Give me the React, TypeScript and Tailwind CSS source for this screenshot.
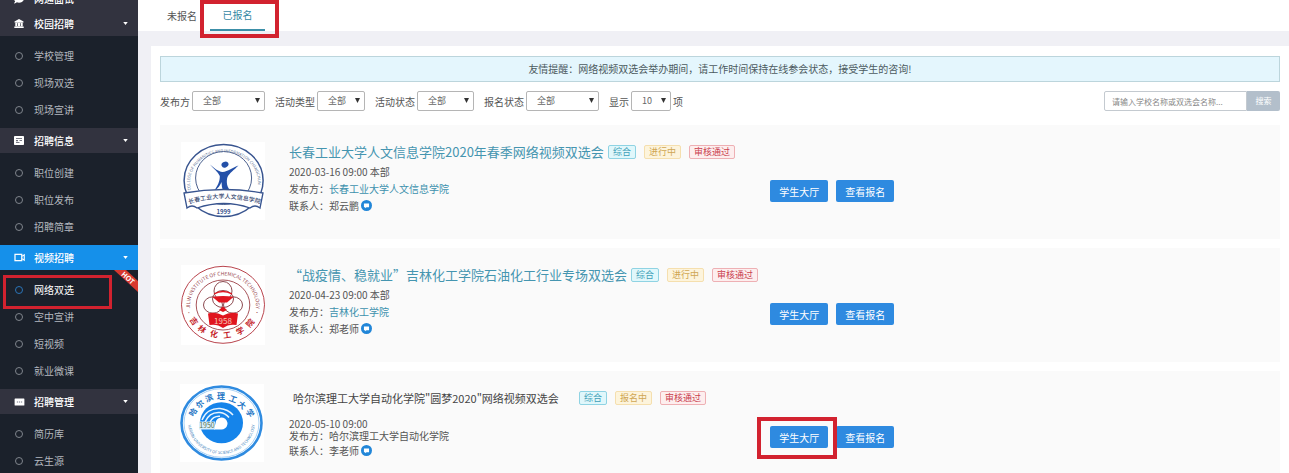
import React from "react";
import { FaComment } from "react-icons/fa";

type MenuGroup = {
  title: string;
  icon: React.ReactNode;
  active?: boolean;
  items: string[];
};

type Tone = "cyan" | "amber" | "red";

type Fair = {
  id: string;
  title: string;
  date: string;
  publisher: string;
  contact: string;
  tags: { label: string; tone: Tone }[];
  logo: React.ReactNode;
  plain?: boolean;
  marked?: boolean;
};

const CampusIcon = () => (
  <svg viewBox="0 0 10 9" className="h-[9px] w-[10px]" fill="#fff">
    <path d="M5 0 9.500 2.600V3.500H.5V2.600z" />
    <path d="M1.300 3.500h7.400v3.700H1.300zM.3 7.600h9.400V9H.3z" />
    <path d="M3.500 4.200v2.800M6.500 4.200v2.800" stroke="#32333f" strokeWidth="0.700" />
  </svg>
);

const NewsIcon = () => (
  <svg viewBox="0 0 10 9" className="h-[9px] w-[10px]">
    <rect width="10" height="9" rx="0.800" fill="#fff" />
    <path d="M2 2.500h6M5.500 4.500H8M2 6.500h3.500" stroke="#6a6b77" strokeWidth="0.900" />
    <path d="M2 4h2v1.300H2z" fill="#6a6b77" />
  </svg>
);

const VideoIcon = () => (
  <svg viewBox="0 0 12 10" className="h-[9px] w-[11px]" fill="none" stroke="currentColor">
    <rect x="1" y="1.500" width="7.500" height="7" strokeWidth="1.400" />
    <path d="M9 3.600 11.300 2v6L9 6.400" strokeWidth="1.200" />
  </svg>
);

const ManageIcon = () => (
  <svg viewBox="0 0 12 9" className="h-2 w-[11px]">
    <rect x="0.500" y="0.500" width="11" height="8" rx="0.600" fill="#fff" />
    <path d="M3 4.500h1.400M5.300 4.500h1.400M7.600 4.500H9" stroke="#777985" strokeWidth="1.400" />
  </svg>
);

const MENU: MenuGroup[] = [
  {
    title: "校园招聘",
    icon: <CampusIcon />,
    items: ["学校管理", "现场双选", "现场宣讲"],
  },
  {
    title: "招聘信息",
    icon: <NewsIcon />,
    items: ["职位创建", "职位发布", "招聘简章"],
  },
  {
    title: "视频招聘",
    icon: <VideoIcon />,
    active: true,
    items: ["网络双选", "空中宣讲", "短视频", "就业微课"],
  },
  {
    title: "招聘管理",
    icon: <ManageIcon />,
    items: ["简历库", "云生源"],
  },
];

const TONES: Record<Tone, string> = {
  cyan: "border-[#8fd3e3] bg-[#e0f7fb] text-[#3f9fb8]",
  amber: "border-[#f5dfae] bg-[#fdf4dc] text-[#cfa653]",
  red: "border-[#eeb0b4] bg-[#fdeeee] text-[#c9414f]",
};

// [character, x, y, rotation] around the emblem ring
type RingChar = [string, number, number, number];

const CHEMICAL_RING: RingChar[] = [
  ["吉", 13, 56, 55],
  ["林", 21, 64, 35],
  ["化", 33, 69, 12],
  ["工", 46, 70, -8],
  ["学", 59, 66, -28],
  ["院", 69, 58, -50],
];

const HARBIN_RING: RingChar[] = [
  ["哈", 13, 28, -60],
  ["尔", 20, 20, -42],
  ["滨", 29, 14, -22],
  ["理", 41, 12, 0],
  ["工", 53, 15, 20],
  ["大", 62, 21, 40],
  ["学", 70, 29, 60],
];

function RingText({ chars, fill }: { chars: RingChar[]; fill: string }) {
  return (
    <g fontSize="8" fontWeight="700" fill={fill} textAnchor="middle">
      {chars.map(([char, x, y, angle]) => (
        <text key={char} transform={`translate(${x} ${y}) rotate(${angle})`} y="3">
          {char}
        </text>
      ))}
    </g>
  );
}

const LogoHumanities = () => (
  <svg viewBox="0 0 84 78" className="h-[78px] w-[84px] bg-white" role="img" aria-label="长春工业大学人文信息学院">
    <defs>
      <path id="hum-top" d="M10 48A34 30.500 0 1 1 76 48" />
      <path id="hum-band" d="M8 62Q42.500 51 79 62" />
    </defs>
    <ellipse cx="42.600" cy="38.500" rx="39.500" ry="36" fill="#fff" stroke="#38548f" strokeWidth="1.500" />
    <ellipse cx="42.600" cy="36" rx="28" ry="26.500" fill="none" stroke="#4a5f8d" strokeWidth="1" />
    <text fontSize="4" fill="#667799">
      <textPath href="#hum-top">COLLEGE OF HUMANITIES AND INFORMATION CHANGCHUN</textPath>
    </text>
    <ellipse cx="44" cy="22.600" rx="3.600" ry="2.900" fill="#2450a8" transform="rotate(-25 44 22.600)" />
    <path
      d="M29 22.500C33 26 37 29.500 41.500 30 47 29.500 52 25.500 57.500 23.500 53 28 48.500 31 46.500 35 45 40 46 45 49.500 49H42C41 46 40.500 43 40.500 40 39.500 43 37 46.500 33 49 36.500 44 39 39.500 38.800 34 37 30 32.500 26.500 29 22.500Z"
      fill="#2450a8"
    />
    <path d="M3 51Q43 44 82 51L79 66Q74 62 69 66Q43 57 16 66Q11 62 6 66Z" fill="#fff" stroke="#38548f" strokeWidth="1.300" />
    <text fontSize="6" fontWeight="500" fill="#34466f" textAnchor="middle">
      <textPath href="#hum-band" startOffset="50%">
        长春工业大学人文信息学院
      </textPath>
    </text>
    <text x="42.500" y="71.500" fontSize="6" fontWeight="700" textAnchor="middle" fill="#38548f">
      1999
    </text>
  </svg>
);

const LogoChemical = () => (
  <svg viewBox="0 0 84 80" className="h-20 w-[84px] bg-white" role="img" aria-label="吉林化工学院">
    <defs>
      <path id="chem-top" d="M10.500 50A33 30.500 0 1 1 73.500 50" />
    </defs>
    <ellipse cx="42" cy="39.800" rx="41.500" ry="38.500" fill="#fff" stroke="#b9444d" strokeWidth="1" />
    <ellipse cx="42" cy="40" rx="26.800" ry="25" fill="none" stroke="#a8545a" strokeWidth="1" />
    <text fontSize="5" fill="#9a4a50" textAnchor="middle">
      <textPath href="#chem-top" startOffset="50%">
        • JILIN INSTITUTE OF CHEMICAL TECHNOLOGY •
      </textPath>
    </text>
    <RingText chars={CHEMICAL_RING} fill="#c51f2b" />
    <g fill="none" stroke="#8c4a50" strokeWidth="1">
      <ellipse cx="42" cy="26" rx="9" ry="9.500" />
      <ellipse cx="32" cy="40" rx="9.500" ry="8.200" />
      <ellipse cx="52" cy="40" rx="9.500" ry="8.200" />
      <ellipse cx="42" cy="34" rx="10.500" ry="8.500" />
    </g>
    <path d="M31.500 32Q42 30 52.500 32L46 37.500H38Z" fill="#e0151f" />
    <path d="M33 29Q42 24 51 29" fill="none" stroke="#e0151f" strokeWidth="1.400" />
    <path d="M38 45 42 41.500 46 45 42 47Z" fill="#e0151f" />
    <path d="M27 48.500Q35 46.500 42 50.500Q49 46.500 57 48.500L55.500 60Q48 58.500 42 63Q36 58.500 28.500 60Z" fill="#e0151f" />
    <text x="42" y="58.500" fontSize="8" textAnchor="middle" fill="#f7c9b8">
      1958
    </text>
  </svg>
);

const LogoHarbin = () => (
  <svg viewBox="0 0 84 78" className="h-[78px] w-[84px] bg-white" role="img" aria-label="哈尔滨理工大学">
    <defs>
      <path id="hrb-low" d="M8 38A33.500 32 0 0 0 75 38" />
    </defs>
    <ellipse cx="41.500" cy="39" rx="40" ry="36.500" fill="#fff" stroke="#2f8be0" strokeWidth="2.600" />
    <ellipse cx="41.500" cy="39" rx="37.500" ry="34.300" fill="none" stroke="#a9d2f5" strokeWidth="1" />
    <RingText chars={HARBIN_RING} fill="#2676c4" />
    <text fontSize="4" fill="#4a87be" textAnchor="middle">
      <textPath href="#hrb-low" startOffset="50%">
        HARBIN UNIVERSITY OF SCIENCE AND TECHNOLOGY
      </textPath>
    </text>
    <ellipse cx="41.500" cy="38.800" rx="21.500" ry="20.500" fill="#1584ea" />
    <g fill="none" stroke="#e9f5ff" strokeWidth="1.500">
      <path d="M22 36C25 28 32 24 40 24.500C46 25 50 27.500 53 31" />
      <path d="M25 38C28 31 34 28 40 28.500C44 29 47 31 49 33.500" />
      <path d="M30 38C32 34 36 32 40 32.300" />
    </g>
    <path d="M34 45.500H41A6 6 0 1 0 36 37Z" fill="#fff" />
    <rect x="19" y="37.500" width="16" height="8" fill="#d8eefc" />
    <text x="27" y="44" fontSize="7" textAnchor="middle" fill="#56724f">
      1950
    </text>
  </svg>
);

const FAIRS: Fair[] = [
  {
    id: "humanities",
    title: "长春工业大学人文信息学院2020年春季网络视频双选会",
    date: "2020-03-16 09:00 本部",
    publisher: "长春工业大学人文信息学院",
    contact: "郑云鹏",
    tags: [
      { label: "综合", tone: "cyan" },
      { label: "进行中", tone: "amber" },
      { label: "审核通过", tone: "red" },
    ],
    logo: <LogoHumanities />,
  },
  {
    id: "chemical",
    title: "“战疫情、稳就业”吉林化工学院石油化工行业专场双选会",
    date: "2020-04-23 09:00 本部",
    publisher: "吉林化工学院",
    contact: "郑老师",
    tags: [
      { label: "综合", tone: "cyan" },
      { label: "进行中", tone: "amber" },
      { label: "审核通过", tone: "red" },
    ],
    logo: <LogoChemical />,
  },
  {
    id: "harbin",
    title: "哈尔滨理工大学自动化学院\"圆梦2020\"网络视频双选会",
    date: "2020-05-10 09:00",
    publisher: "哈尔滨理工大学自动化学院",
    contact: "李老师",
    tags: [
      { label: "综合", tone: "cyan" },
      { label: "报名中", tone: "amber" },
      { label: "审核通过", tone: "red" },
    ],
    logo: <LogoHarbin />,
    plain: true,
    marked: true,
  },
];

function HotRibbon() {
  return (
    <svg viewBox="0 0 25 23" className="absolute top-0 right-0 h-[23px] w-[25px]">
      <path d="M1 0H13L25 11V22Z" fill="#d8382f" />
      <text
        x="15"
        y="10.500"
        fontSize="7"
        fontWeight="700"
        textAnchor="middle"
        fill="#fff"
        transform="rotate(42 15 8)"
      >
        HOT
      </text>
    </svg>
  );
}

function GroupHeader({ title, icon, active }: Omit<MenuGroup, "items">) {
  return (
    <button
      type="button"
      className={`flex h-[25px] w-full items-center pr-[10px] pl-[14px] text-[10px] font-medium text-white ${
        active ? "bg-[#1590ea]" : "bg-[#32333f]"
      }`}
    >
      <span className="flex w-[20px] items-center">{icon}</span>
      <span className="flex-1 text-left">{title}</span>
      <svg viewBox="0 0 6 4" className="h-[3px] w-[5px]">
        <path d="M0 0h6L3 4z" fill="currentColor" />
      </svg>
    </button>
  );
}

function Sidebar() {
  return (
    <nav className="w-[138px] shrink-0 overflow-hidden bg-[#1b212b]">
      <div className="-mt-[14px]">
        <GroupHeader title="网通面试" icon={<FaComment size={10} />} />
        {MENU.map((group) => (
          <div key={group.title}>
            <GroupHeader title={group.title} icon={group.icon} active={group.active} />
            <ul className="relative pt-[6px] pb-[5px]">
              {group.active && <HotRibbon />}
              {group.items.map((item) => {
                const current = item === "网络双选";
                return (
                  <li key={item} className="relative">
                    <a
                      href="#"
                      className={`flex h-[27px] items-center gap-[11px] pl-[15px] text-[10px] ${
                        current ? "text-white" : "text-[#b4b8bf]"
                      }`}
                    >
                      <span
                        className={`size-2 rounded-full border ${
                          current ? "border-[#2a74b8]" : "border-[#80858d]"
                        }`}
                      />
                      {item}
                    </a>
                    {current && (
                      <span className="pointer-events-none absolute -top-px left-[3px] h-[34px] w-[109px] border-3 border-[#d2222f]" />
                    )}
                  </li>
                );
              })}
            </ul>
          </div>
        ))}
      </div>
    </nav>
  );
}

function Filter({
  id,
  label,
  value,
  width,
  suffix,
}: {
  id: string;
  label: string;
  value: string;
  width: string;
  suffix?: string;
}) {
  return (
    <div className="flex items-center gap-0.5">
      <label htmlFor={id}>{label}</label>
      <span className={`relative ${width}`}>
        <select
          id={id}
          className="block h-5 w-full appearance-none rounded-xs border border-[#b5b5b5] bg-white pl-[10px] text-[9px] text-[#666]"
        >
          <option>{value}</option>
        </select>
        <svg viewBox="0 0 5 5" className="pointer-events-none absolute top-[7px] right-[5px] size-[5px]">
          <path d="M0 0h5L2.500 5z" fill="#333" />
        </svg>
      </span>
      {suffix && <span>{suffix}</span>}
    </div>
  );
}

function FairCard({ fair }: { fair: Fair }) {
  const { title, date, publisher, contact, tags, logo, plain, marked } = fair;

  return (
    <li className="grid min-h-[114px] grid-cols-[129px_17fr_18fr] bg-[#fafafa]">
      <div className={plain ? "pt-[13px] pl-[20px]" : "pt-[17px] pl-[21px]"}>{logo}</div>

      {/* Info */}
      <div className="pt-[18px] text-[10px] whitespace-nowrap text-[#555]">
        <div className={plain ? "flex h-[18px] items-center gap-[20px] pl-1" : "flex h-[18px] items-center gap-1"}>
          <h3>
            {plain ? (
              <span className="text-[11px] text-[#444]">{title}</span>
            ) : (
              <a href="#" className="text-[13px] text-[#4595b0]">
                {title}
              </a>
            )}
          </h3>
          <div className="flex gap-2">
            {tags.map((tag) => (
              <span
                key={tag.label}
                className={`h-[14px] rounded-xs border px-1 text-[9px] leading-[12px] ${TONES[tag.tone]}`}
              >
                {tag.label}
              </span>
            ))}
          </div>
        </div>
        <p className={plain ? "mt-[11px] leading-[12px]" : "mt-0.5 leading-[17px]"}>{date}</p>
        <p className={plain ? "leading-[12px]" : "leading-[17px]"}>
          发布方：
          {plain ? (
            publisher
          ) : (
            <a href="#" className="text-[#3d91ad]">
              {publisher}
            </a>
          )}
        </p>
        <p className="flex items-center gap-0.5 leading-[17px]">
          联系人：{contact}
          <button type="button" aria-label="在线沟通">
            <svg viewBox="0 0 12 12" className="size-[11px]">
              <circle cx="6" cy="6" r="6" fill="#2186d8" />
              <path d="M3.200 3.800h5.600v4H6L4.500 9V7.800H3.200z" fill="#fff" />
            </svg>
          </button>
        </p>
      </div>

      {/* Actions */}
      <div className="flex items-start gap-2 pt-[55px] text-[10px] text-white">
        <div className="relative">
          <button type="button" className="h-[22px] w-[58px] rounded-xs bg-[#2e8ae0]">
            学生大厅
          </button>
          {marked && (
            <span className="pointer-events-none absolute -top-[9px] -left-[13px] z-10 h-[42px] w-[80px] border-4 border-[#d2222f]" />
          )}
        </div>
        <button type="button" className="h-[22px] w-[58px] rounded-xs bg-[#2e8ae0]">
          查看报名
        </button>
      </div>
    </li>
  );
}

export default function App() {
  return (
    <div
      lang="zh-CN"
      className="flex h-screen overflow-hidden bg-[#f0f0f5] font-['Noto_Sans_CJK_SC',sans-serif] text-[10px] text-[#555]"
    >
      <Sidebar />

      <main className="min-w-0 flex-1">
        {/* Tabs */}
        <div className="flex h-[31px] bg-white pl-[18px]">
          <a href="#" className="flex items-center px-[11px]">
            未报名
          </a>
          <div className="relative ml-[2px]">
            <a
              href="#"
              className="flex h-[31px] w-[55px] items-center justify-center border-b-2 border-[#3c8fa8] text-[#3488a4]"
            >
              已报名
            </a>
            <span className="pointer-events-none absolute top-0 -left-[10px] h-[38px] w-[79px] border-4 border-[#d2222f]" />
          </div>
        </div>

        <section className="mt-[15px] ml-[13px] bg-white px-[9px] pt-[10px]">
          <p className="h-[26px] border border-[#bcd5dc] bg-[#e4f6fd] text-center leading-[24px] text-[#4c5a60]">
            友情提醒：网络视频双选会举办期间，请工作时间保持在线参会状态，接受学生的咨询!
          </p>

          {/* Filters */}
          <div className="mt-[9px] flex items-center justify-between">
            <form className="flex gap-[10px]">
              <Filter id="publisher" label="发布方" value="全部" width="w-[73px]" />
              <Filter id="kind" label="活动类型" value="全部" width="w-[48px]" />
              <Filter id="state" label="活动状态" value="全部" width="w-[57px]" />
              <Filter id="signup" label="报名状态" value="全部" width="w-[73px]" />
              <Filter id="size" label="显示" value="10" width="w-[40px]" suffix="项" />
            </form>
            <form className="flex">
              <input
                type="text"
                aria-label="搜索学校或双选会"
                placeholder="请输入学校名称或双选会名称..."
                className="h-5 w-[143px] rounded-l-xs border border-[#c4cad0] bg-white px-[7px] text-[8px] placeholder:text-[#888]"
              />
              <button type="button" className="h-5 w-[33px] rounded-r-xs bg-[#b3bfcb] text-[8px] text-white">
                搜索
              </button>
            </form>
          </div>

          <ul className="mt-[14px] flex flex-col gap-[9px]">
            {FAIRS.map((fair) => (
              <FairCard key={fair.id} fair={fair} />
            ))}
          </ul>
        </section>
      </main>
    </div>
  );
}
